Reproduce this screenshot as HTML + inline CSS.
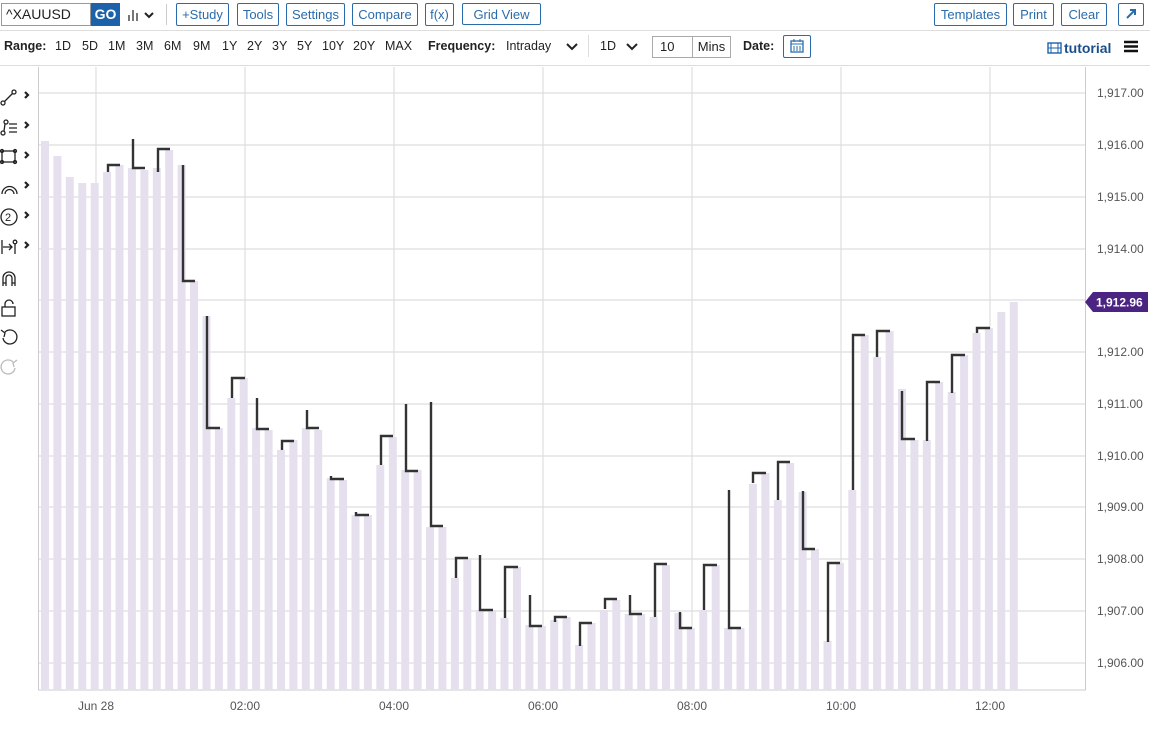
<!DOCTYPE html>
<html><head><meta charset="utf-8"><style>
*{box-sizing:border-box;margin:0;padding:0}
body{width:1156px;height:734px;background:#fff;font-family:"Liberation Sans",sans-serif;font-size:13px;color:#222;position:relative;overflow:hidden}
.btn{position:absolute;top:3px;height:23px;border:1px solid #2a6cab;border-radius:2px;color:#2a6cab;font-size:13px;line-height:21px;text-align:center}
.r2{position:absolute;top:39px;font-size:12.5px;color:#222}
.b{font-weight:bold}
.ax{position:absolute;left:1097px;font-size:12px;color:#555}
.xl{position:absolute;top:699px;font-size:12px;color:#555}
</style></head><body>
<div style="position:absolute;left:1px;top:3px;width:90px;height:23px;border:1px solid #999;font-size:14px;line-height:21px;padding-left:4px">^XAUUSD</div>
<div style="position:absolute;left:91px;top:3px;width:29px;height:23px;background:#1c62ab;color:#fff;font-weight:bold;font-size:14px;line-height:23px;text-align:center">GO</div>
<svg style="position:absolute;left:127px;top:7px" width="32" height="16"><path d="M2 14V8M6 14V3M10 14V6" stroke="#555" stroke-width="1.6"/><path d="M18 6l4 4 4-4" stroke="#222" stroke-width="2" fill="none"/></svg>
<div style="position:absolute;left:166px;top:4px;width:1px;height:21px;background:#ccc"></div>
<div class="btn" style="left:176px;width:53px">+Study</div>
<div class="btn" style="left:237px;width:42px">Tools</div>
<div class="btn" style="left:286px;width:59px">Settings</div>
<div class="btn" style="left:352px;width:66px">Compare</div>
<div class="btn" style="left:425px;width:29px">f(x)</div>
<div class="btn" style="left:462px;width:79px;height:22px">Grid View</div>
<div class="btn" style="left:934px;width:73px">Templates</div>
<div class="btn" style="left:1013px;width:41px">Print</div>
<div class="btn" style="left:1061px;width:46px">Clear</div>
<div class="btn" style="left:1118px;width:26px"><svg width="14" height="14" style="margin-top:3px"><path d="M3 11L11 3M6 3h5v5" stroke="#2a6cab" stroke-width="2" fill="none"/></svg></div>
<div style="position:absolute;left:0;top:30px;width:1150px;height:1px;background:#ddd"></div>
<div class="r2 b" style="left:4px">Range:</div>
<div class="r2" style="left:55px">1D</div>
<div class="r2" style="left:82px">5D</div>
<div class="r2" style="left:108px">1M</div>
<div class="r2" style="left:136px">3M</div>
<div class="r2" style="left:164px">6M</div>
<div class="r2" style="left:193px">9M</div>
<div class="r2" style="left:222px">1Y</div>
<div class="r2" style="left:247px">2Y</div>
<div class="r2" style="left:272px">3Y</div>
<div class="r2" style="left:297px">5Y</div>
<div class="r2" style="left:322px">10Y</div>
<div class="r2" style="left:353px">20Y</div>
<div class="r2" style="left:385px">MAX</div>
<div class="r2 b" style="left:428px">Frequency:</div>
<div class="r2" style="left:506px">Intraday</div>
<svg style="position:absolute;left:565px;top:42px" width="14" height="10"><path d="M2 2l5 5 5-5" stroke="#222" stroke-width="2" fill="none"/></svg>
<div style="position:absolute;left:588px;top:35px;width:1px;height:22px;background:#ddd"></div>
<div class="r2" style="left:600px">1D</div>
<svg style="position:absolute;left:625px;top:42px" width="14" height="10"><path d="M2 2l5 5 5-5" stroke="#222" stroke-width="2" fill="none"/></svg>
<div style="position:absolute;left:652px;top:36px;width:41px;height:22px;border:1px solid #aaa;padding-left:7px;line-height:20px">10</div>
<div style="position:absolute;left:692px;top:36px;width:39px;height:22px;border:1px solid #aaa;line-height:20px;text-align:center">Mins</div>
<div class="r2 b" style="left:743px">Date:</div>
<div style="position:absolute;left:783px;top:35px;width:28px;height:23px;border:1px solid #2a6cab;border-radius:2px"><svg width="26" height="21"><rect x="7" y="5" width="12" height="11" fill="none" stroke="#2a6cab" stroke-width="1.3"/><path d="M7 8h12M10 10v5M13 10v5M16 10v5M10 3v3M16 3v3" stroke="#2a6cab" stroke-width="1"/></svg></div>
<svg style="position:absolute;left:1047px;top:42px" width="15" height="12"><rect x="1" y="1" width="13" height="10" fill="none" stroke="#1c62ab" stroke-width="1.4"/><path d="M4 1v10M11 1v10M1 6h13" stroke="#1c62ab"/></svg>
<div style="position:absolute;left:1064px;top:40px;font-weight:bold;color:#1c4f8a;font-size:14px">tutorial</div>
<svg style="position:absolute;left:1123px;top:40px" width="16" height="13"><path d="M1 2h14M1 6.5h14M1 11h14" stroke="#111" stroke-width="2.4"/></svg>
<div style="position:absolute;left:0;top:65px;width:1150px;height:1px;background:#ddd"></div>

<svg style="position:absolute;left:0;top:80px" width="36" height="300" fill="none" stroke="#222" stroke-width="1.3">
<g transform="translate(0,8)"><circle cx="3" cy="15" r="2"/><circle cx="14" cy="4" r="2"/><path d="M4.5 13.5l8-8"/></g>
<g transform="translate(0,38)"><circle cx="6" cy="4" r="2"/><circle cx="3" cy="15" r="2"/><path d="M5 6l-1 7M9 6h8M9 10h8M9 14h8"/></g>
<g transform="translate(0,68)"><rect x="2" y="3" width="13" height="11"/><circle cx="2" cy="3" r="1.5"/><circle cx="15" cy="3" r="1.5"/><circle cx="2" cy="14" r="1.5"/><circle cx="15" cy="14" r="1.5"/></g>
<g transform="translate(0,98)"><path d="M2 16a7.5 7.5 0 0 1 15 0M5 16a4.5 4.5 0 0 1 9 0"/></g>
<g transform="translate(0,128)"><circle cx="9" cy="9" r="8"/><text x="5" y="13" font-size="11" stroke="none" fill="#222" font-family="Liberation Sans">2</text></g>
<g transform="translate(0,158)"><path d="M2 2v14M3 9h9M9 6l3 3-3 3M15 6v10"/><circle cx="15" cy="4" r="1.8"/></g>
<g transform="translate(0,188)"><path d="M3 18V10a6 6 0 0 1 12 0v8M6 18V10a3 3 0 0 1 6 0v8M3 15h3M12 15h3"/></g>
<g transform="translate(0,218)"><rect x="2" y="9" width="13" height="9"/><path d="M5 9V6a4 4 0 0 1 8 0"/></g>
<g transform="translate(0,248)"><path d="M5 4a7 7 0 1 1-2 6"/><path d="M1 2l4 3-1 4"/></g>
<g transform="translate(0,278)" stroke="#bbb"><path d="M13 4a7 7 0 1 0 2 6"/><path d="M17 2l-4 3 1 4"/></g>
<g stroke-width="2.2"><path d="M25 12l3 3-3 3M25 42l3 3-3 3M25 72l3 3-3 3M25 102l3 3-3 3M25 132l3 3-3 3M25 162l3 3-3 3"/></g>
</svg>

<svg style="position:absolute;left:0;top:0" width="1156" height="734">
<g stroke="#dedede" stroke-width="1.2">
<path d="M38 93H1085M38 145H1085M38 197H1085M38 249H1085M38 300H1085M38 352H1085M38 404H1085M38 456H1085M38 507H1085M38 559H1085M38 611H1085M38 663H1085"/>
<path d="M96 67V690M245 67V690M394 67V690M543 67V690M692 67V690M841 67V690M990 67V690"/>
</g>
<path d="M38.5 67V690H1085.5V67" stroke="#ccc" fill="none"/>
<g fill="#e6e0ee">
<rect x="41" y="141" width="8" height="549"/><rect x="53.4" y="156" width="8" height="534"/><rect x="65.8" y="177" width="8" height="513"/><rect x="78.3" y="183" width="8" height="507"/><rect x="90.7" y="183" width="8" height="507"/><rect x="103.1" y="172" width="8" height="518"/><rect x="115.5" y="165" width="8" height="525"/><rect x="127.9" y="168" width="8" height="522"/><rect x="140.4" y="170" width="8" height="520"/><rect x="152.8" y="168" width="8" height="522"/><rect x="165.2" y="150" width="8" height="540"/><rect x="177.6" y="165" width="8" height="525"/><rect x="190" y="281" width="8" height="409"/><rect x="202.5" y="316" width="8" height="374"/><rect x="214.9" y="428" width="8" height="262"/><rect x="227.3" y="398" width="8" height="292"/><rect x="239.7" y="378" width="8" height="312"/><rect x="252.1" y="428" width="8" height="262"/><rect x="264.6" y="430" width="8" height="260"/><rect x="277" y="450" width="8" height="240"/><rect x="289.4" y="440" width="8" height="250"/><rect x="301.8" y="428" width="8" height="262"/><rect x="314.2" y="430" width="8" height="260"/><rect x="326.7" y="478" width="8" height="212"/><rect x="339.1" y="480" width="8" height="210"/><rect x="351.5" y="515" width="8" height="175"/><rect x="363.9" y="515" width="8" height="175"/><rect x="376.3" y="465" width="8" height="225"/><rect x="388.8" y="437" width="8" height="253"/><rect x="401.2" y="470" width="8" height="220"/><rect x="413.6" y="470" width="8" height="220"/><rect x="426" y="527" width="8" height="163"/><rect x="438.4" y="527" width="8" height="163"/><rect x="450.9" y="578" width="8" height="112"/><rect x="463.3" y="558" width="8" height="132"/><rect x="475.7" y="610" width="8" height="80"/><rect x="488.1" y="610" width="8" height="80"/><rect x="500.5" y="618" width="8" height="72"/><rect x="513" y="567" width="8" height="123"/><rect x="525.4" y="625" width="8" height="65"/><rect x="537.8" y="626" width="8" height="64"/><rect x="550.2" y="620" width="8" height="70"/><rect x="562.6" y="617" width="8" height="73"/><rect x="575.1" y="645" width="8" height="45"/><rect x="587.5" y="623" width="8" height="67"/><rect x="599.9" y="610" width="8" height="80"/><rect x="612.3" y="600" width="8" height="90"/><rect x="624.7" y="614" width="8" height="76"/><rect x="637.2" y="614" width="8" height="76"/><rect x="649.6" y="617" width="8" height="73"/><rect x="662" y="565" width="8" height="125"/><rect x="674.4" y="613" width="8" height="77"/><rect x="686.8" y="628" width="8" height="62"/><rect x="699.3" y="610" width="8" height="80"/><rect x="711.7" y="565" width="8" height="125"/><rect x="724.1" y="628" width="8" height="62"/><rect x="736.5" y="628" width="8" height="62"/><rect x="748.9" y="484" width="8" height="206"/><rect x="761.4" y="473" width="8" height="217"/><rect x="773.8" y="500" width="8" height="190"/><rect x="786.2" y="463" width="8" height="227"/><rect x="798.6" y="492" width="8" height="198"/><rect x="811" y="549" width="8" height="141"/><rect x="823.5" y="641" width="8" height="49"/><rect x="835.9" y="563" width="8" height="127"/><rect x="848.3" y="490" width="8" height="200"/><rect x="860.7" y="335" width="8" height="355"/><rect x="873.1" y="357" width="8" height="333"/><rect x="885.6" y="331" width="8" height="359"/><rect x="898" y="389" width="8" height="301"/><rect x="910.4" y="440" width="8" height="250"/><rect x="922.8" y="440" width="8" height="250"/><rect x="935.2" y="382" width="8" height="308"/><rect x="947.7" y="392" width="8" height="298"/><rect x="960.1" y="355" width="8" height="335"/><rect x="972.5" y="333" width="8" height="357"/><rect x="984.9" y="328" width="8" height="362"/><rect x="997.3" y="312" width="8" height="378"/><rect x="1009.8" y="302" width="8" height="388"/>
</g>
<g stroke="#333" stroke-width="2.4" fill="none">
<path d="M108 172V165H120"/><path d="M133 139V168H145"/><path d="M158 172V149H170"/><path d="M183 165V281H195"/><path d="M207 316V428H220"/><path d="M232 398V378H245"/><path d="M257 398V429H269"/><path d="M282 450V441H294"/><path d="M307 410V428H319"/><path d="M331 476V479H344"/><path d="M356 512V515H369"/><path d="M381 465V436H393"/><path d="M406 404V471H418"/><path d="M431 402V526H443"/><path d="M456 578V558H468"/><path d="M480 555V610H493"/><path d="M505 618V567H518"/><path d="M530 595V626H542"/><path d="M555 622V617H567"/><path d="M580 646V623H592"/><path d="M605 609V599H617"/><path d="M630 595V614H642"/><path d="M655 617V564H667"/><path d="M680 612V628H692"/><path d="M704 610V565H717"/><path d="M729 490V628H741"/><path d="M753 483V473H766"/><path d="M778 500V462H790"/><path d="M803 491V549H815"/><path d="M828 642V563H840"/><path d="M853 490V335H865"/><path d="M877 357V331H890"/><path d="M902 391V439H915"/><path d="M927 441V382H940"/><path d="M952 393V355H965"/><path d="M977 333V328H990"/>
</g>
<path d="M1085 302L1093 292H1148V312H1093Z" fill="#4b2382"/>
<text x="1096" y="306.5" fill="#fff" font-size="12" font-weight="bold" font-family="Liberation Sans">1,912.96</text>
</svg>
<div class="ax" style="top:86px">1,917.00</div>
<div class="ax" style="top:138px">1,916.00</div>
<div class="ax" style="top:190px">1,915.00</div>
<div class="ax" style="top:242px">1,914.00</div>
<div class="ax" style="top:345px">1,912.00</div>
<div class="ax" style="top:397px">1,911.00</div>
<div class="ax" style="top:449px">1,910.00</div>
<div class="ax" style="top:500px">1,909.00</div>
<div class="ax" style="top:552px">1,908.00</div>
<div class="ax" style="top:604px">1,907.00</div>
<div class="ax" style="top:656px">1,906.00</div>
<div class="xl" style="left:78px">Jun 28</div>
<div class="xl" style="left:230px">02:00</div>
<div class="xl" style="left:379px">04:00</div>
<div class="xl" style="left:528px">06:00</div>
<div class="xl" style="left:677px">08:00</div>
<div class="xl" style="left:826px">10:00</div>
<div class="xl" style="left:975px">12:00</div>
</body></html>
